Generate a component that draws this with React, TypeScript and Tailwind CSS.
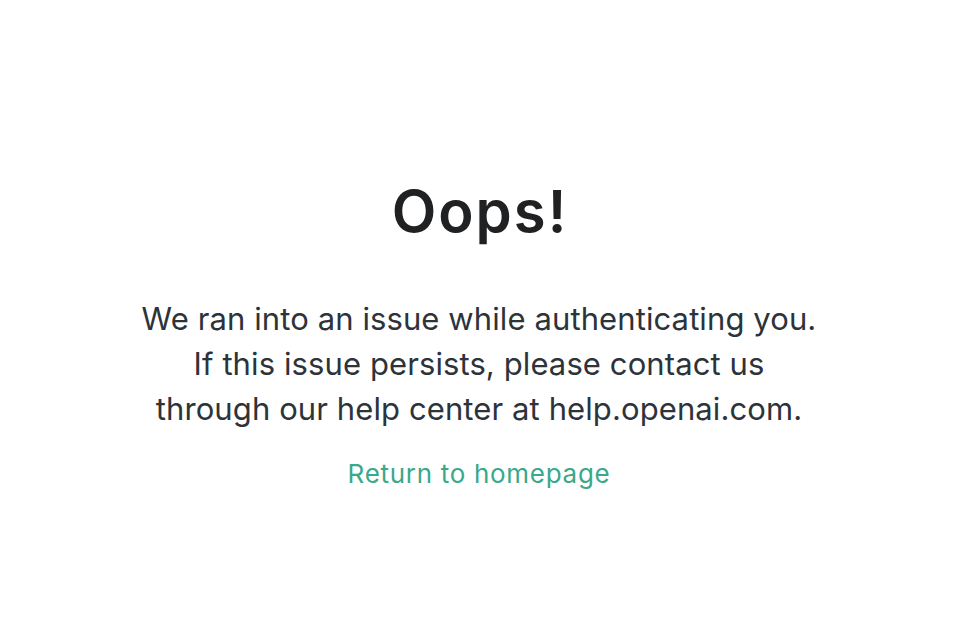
export default function App() {
  return (
    <div className="w-[963px] h-[641px] bg-white flex flex-col items-center pt-[176px] pr-[5px] font-['Inter',sans-serif]">
      <h1 className="text-[58px] leading-[70px] font-semibold text-[#202123] tracking-[2px] pl-[2px]">Oops!</h1>
      <div className="mt-[50px] text-center text-[31px] leading-[45px] tracking-[0.1px] text-[#2d333a]">
        <div>We ran into an issue while authenticating you.</div>
        <div>If this issue persists, please contact us</div>
        <div>through our help center at help.openai.com.</div>
      </div>
      <a href="#" className="mt-[25px] text-[26px] leading-[36px] tracking-[0.7px] text-[#3aa88a]">Return to homepage</a>
    </div>
  );
}
